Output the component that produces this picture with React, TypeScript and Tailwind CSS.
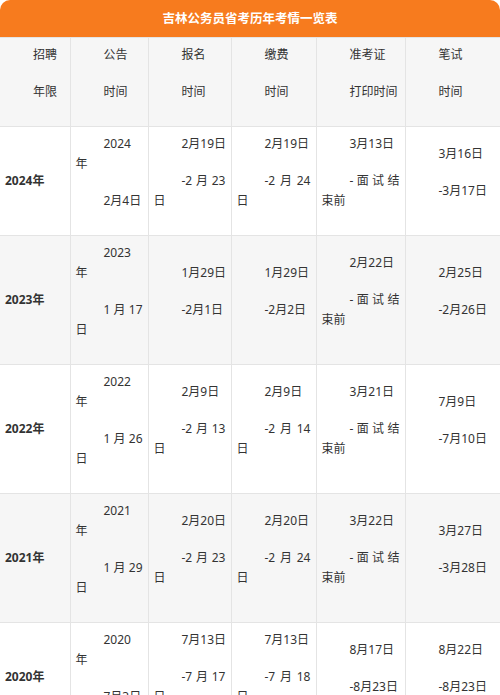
import React from 'react';

// each cell: list of paragraphs, each paragraph: list of lines.
// non-last lines are justified (tokens split on spaces), first line indented.
type Cell = string[][];

interface Row {
  year: string;
  shaded: boolean;
  cells: Cell[];
}

const header: Cell[] = [
  [['招聘'], ['年限']],
  [['公告'], ['时间']],
  [['报名'], ['时间']],
  [['缴费'], ['时间']],
  [['准考证'], ['打印时间']],
  [['笔试'], ['时间']],
];

const rows: Row[] = [
  {
    year: '2024年',
    shaded: false,
    cells: [
      [['2024', '年'], ['2月4日']],
      [['2月19日'], ['-2 月 23', '日']],
      [['2月19日'], ['-2 月 24', '日']],
      [['3月13日'], ['- 面 试 结', '束前']],
      [['3月16日'], ['-3月17日']],
    ],
  },
  {
    year: '2023年',
    shaded: true,
    cells: [
      [['2023', '年'], ['1 月 17', '日']],
      [['1月29日'], ['-2月1日']],
      [['1月29日'], ['-2月2日']],
      [['2月22日'], ['- 面 试 结', '束前']],
      [['2月25日'], ['-2月26日']],
    ],
  },
  {
    year: '2022年',
    shaded: false,
    cells: [
      [['2022', '年'], ['1 月 26', '日']],
      [['2月9日'], ['-2 月 13', '日']],
      [['2月9日'], ['-2 月 14', '日']],
      [['3月21日'], ['- 面 试 结', '束前']],
      [['7月9日'], ['-7月10日']],
    ],
  },
  {
    year: '2021年',
    shaded: true,
    cells: [
      [['2021', '年'], ['1 月 29', '日']],
      [['2月20日'], ['-2 月 23', '日']],
      [['2月20日'], ['-2 月 24', '日']],
      [['3月22日'], ['- 面 试 结', '束前']],
      [['3月27日'], ['-3月28日']],
    ],
  },
  {
    year: '2020年',
    shaded: false,
    cells: [
      [['2020', '年'], ['7月3日']],
      [['7月13日'], ['-7 月 17', '日']],
      [['7月13日'], ['-7 月 18', '日']],
      [['8月17日'], ['-8月23日']],
      [['8月22日'], ['-8月23日']],
    ],
  },
];

const Paragraph: React.FC<{ lines: string[] }> = ({ lines }) => (
  <div className="mb-[17px]">
    {lines.map((line, i) => {
      const isLast = i === lines.length - 1;
      const indent = i === 0 ? 'pl-[28px]' : '';
      if (isLast) {
        return (
          <div key={i} className={`whitespace-nowrap ${indent}`}>
            {line}
          </div>
        );
      }
      return (
        <div key={i} className={`flex justify-between whitespace-nowrap ${indent}`}>
          {line.split(' ').map((tok, j) => (
            <span key={j}>{tok}</span>
          ))}
        </div>
      );
    })}
  </div>
);

const cellClass =
  'border border-[#e4e4e4] px-[5px] py-[7px] align-middle first:border-l-0 last:border-r-0';

const App: React.FC = () => {
  return (
    <div
      className="w-[500px] bg-white text-[#333] text-[12px] leading-[20px]"
      style={{ fontFamily: '"Noto Sans", "Noto Sans CJK SC", sans-serif' }}
    >
      <div className="h-[37px] rounded-t-[10px] bg-[#f77b1e] flex items-center justify-center text-white font-bold text-[12.5px]">
        吉林公务员省考历年考情一览表
      </div>
      <table className="w-[500px] table-fixed">
        <colgroup>
          <col className="w-[70px]" />
          <col className="w-[78px]" />
          <col className="w-[83px]" />
          <col className="w-[85px]" />
          <col className="w-[89px]" />
          <col className="w-[95px]" />
        </colgroup>
        <thead>
          <tr className="bg-[#f6f6f6]">
            {header.map((cell, i) => (
              <th key={i} className={`${cellClass} font-normal text-left`}>
                {cell.map((p, j) => (
                  <Paragraph key={j} lines={p} />
                ))}
              </th>
            ))}
          </tr>
        </thead>
        <tbody>
          {rows.map((row) => (
            <tr key={row.year} className={row.shaded ? 'bg-[#f6f6f6]' : 'bg-white'}>
              <td className={cellClass}>
                <span className="font-bold">{row.year}</span>
              </td>
              {row.cells.map((cell, i) => (
                <td key={i} className={cellClass}>
                  {cell.map((p, j) => (
                    <Paragraph key={j} lines={p} />
                  ))}
                </td>
              ))}
            </tr>
          ))}
        </tbody>
      </table>
    </div>
  );
};

export default App;
